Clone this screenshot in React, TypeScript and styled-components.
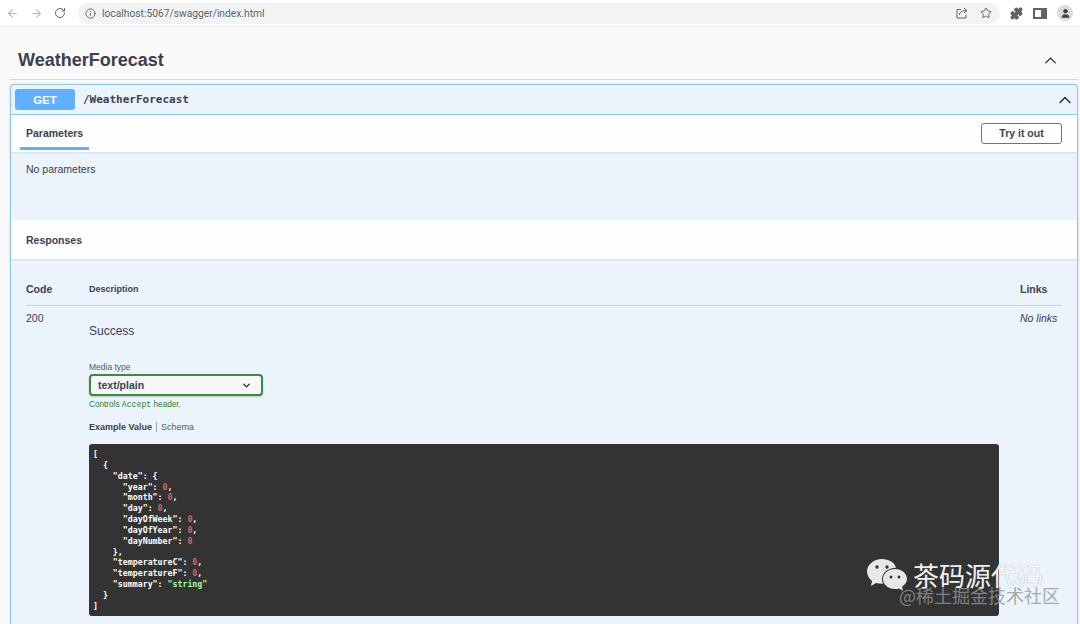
import React from "react";
import styled, { createGlobalStyle } from "styled-components";
import { ArrowLeft, ArrowRight, RotateCw, Info, Star, Puzzle, ChevronUp, ChevronDown, User } from "lucide-react";

const Global = createGlobalStyle`
  html, body { margin: 0; padding: 0; height: 624px; overflow: hidden; background: #fafafa; }
  body { font-family: "Liberation Sans", Arial, sans-serif; color: #3b4151; }
  * { box-sizing: border-box; }
`;
const Page = styled.div`position: relative; width: 1080px; height: 624px; overflow: hidden;`;
const Chrome = styled.div`
  height: 27px; background: #fff; display: flex; align-items: center; padding: 0 6px;
  border-bottom: 1px solid #eeeeee; color: #5f6368;
`;
const NavIcon = styled.span<{ $w?: number; $dim?: boolean }>`
  width: ${p => p.$w ?? 24}px; display: flex; color: ${p => (p.$dim ? "#b4b7bb" : "#5f6368")};
`;
const AddressBar = styled.div`
  width: 922px; height: 21px; margin-left: 4px; border-radius: 11px; background: #f1f3f4;
  display: flex; align-items: center; padding: 0 8px 0 7px; gap: 12px;
`;
const Url = styled.span`font-size: 10.25px; color: #5f6368; flex: 1; font-family: "Roboto", sans-serif; margin-left: -6px;`;
const Tools = styled.div`display: flex; align-items: center; margin-left: 10px; gap: 10px;`;
const Avatar = styled.span`
  width: 16px; height: 16px; border-radius: 50%; background: #dadce0; color: #3c4043;
  display: flex; align-items: center; justify-content: center;
`;
const Panel = styled.div`
  width: 14px; height: 11px; border: 2px solid #5f6368; border-right-width: 6px;
`;
const Main = styled.main`padding: 14px 2px 0 10px;`;
const SectionTitle = styled.div`
  height: 39px; display: flex; align-items: center; justify-content: space-between;
  border-bottom: 1px solid #d9dadc; padding: 0 18px 0 8px;
`;
const H = styled.h3`margin: 1px 0 0; font-size: 18px; font-weight: 700; color: #3b4151;`;
const Op = styled.section`
  margin-top: 4px; width: 1068px; height: 600px; border: 1px solid #90c5f4; border-bottom: 0; border-radius: 4px 4px 0 0;
  background: #ebf3fc; box-shadow: 0 0 3px rgba(0,0,0,.12);
`;
const Summary = styled.div`
  height: 30px; display: flex; align-items: center; padding: 0 2px 0 4px; border-bottom: 1px solid #90c5f4;
`;
const Method = styled.span`
  width: 60px; height: 21px; background: #61affe; color: #fff; border-radius: 3px; font-weight: 700; font-size: 11.5px;
  display: flex; align-items: center; justify-content: center;
`;
const PathText = styled.span`
  margin-left: 8px; flex: 1; font: 700 11px "DejaVu Sans Mono", monospace; color: #3b4151;
`;
const BarRow = styled.div<{ $h: number }>`
  height: ${p => p.$h}px; background: rgba(255,255,255,.85); display: flex; align-items: center;
  justify-content: space-between; padding: 0 15px; box-shadow: 0 1px 2px rgba(0,0,0,.1); position: relative;
`;
const Tab = styled.div`
  align-self: stretch; width: 69px; margin-left: -6px; padding: 12px 0 0 6px; font-size: 10.5px; font-weight: 700;
  border-bottom: 3px solid #61affe; height: 35px; color: #3b4151;
`;
const Heading = styled.div`font-size: 10.5px; font-weight: 700; color: #3b4151;`;
const TryBtn = styled.button`
  width: 81px; height: 21px; margin-top: -1px; background: transparent; border: 1px solid #6f7480; border-radius: 3px;
  font: 700 10.5px "Liberation Sans", sans-serif; color: #3b4151; padding: 0;
`;
const NoParams = styled.div`height: 68px; padding: 11px 15px; font-size: 10.5px; color: #3b4151;`;
const Responses = styled.div`padding: 0 15px;`;
const HeaderRow = styled.div`
  display: grid; grid-template-columns: 63px 1fr 42px; height: 47px; align-items: center; padding-top: 13px;
  border-bottom: 1px solid #cdd2d9;
`;
const Col = styled.div<{ $small?: boolean }>`font-size: ${p => (p.$small ? 9 : 10.5)}px; font-weight: 700; color: #3b4151;`;
const BodyRow = styled.div`display: grid; grid-template-columns: 63px 1fr 42px; padding-top: 6px;`;
const Code = styled.div`font-size: 10.5px; color: #3b4151;`;
const NoLinks = styled.div`font-size: 10.5px; font-style: italic; color: #3b4151;`;
const Desc = styled.div`display: flex; flex-direction: column; align-items: flex-start;`;
const Success = styled.div`margin-top: 12px; font-size: 12px; color: #3b4151; height: 37px;`;
const Label = styled.div`margin-top: 1px; font-size: 8.5px; color: #555b68; height: 12px;`;
const Select = styled.div`
  width: 174px; height: 22px; border: 2px solid #3d8b40; border-radius: 4px; background: #f7f7f7;
  display: flex; align-items: center; justify-content: space-between; padding: 0 9px 0 7px;
  font-size: 10.5px; font-weight: 700; color: #3b4151; box-shadow: 0 1px 2px rgba(0,0,0,.2);
`;
const Controls = styled.div`margin-top: 4px; font-size: 8.2px; color: #2f8132; height: 11px;`;
const Mono = styled.span`font-family: "Liberation Mono", monospace;`;
const Tabs = styled.div`margin-top: 10px; display: flex; align-items: center; font-size: 9px; height: 11px;`;
const ActiveTab = styled.span`font-weight: 700; color: #3b4151; padding-right: 4px; border-right: 1px solid #9aa0a9;`;
const OtherTab = styled.span`color: #555b68; padding-left: 4px;`;
const CodeBlock = styled.div`
  margin: 12px 0 0; width: 910px; height: 172px; padding: 5px 4px; border-radius: 3px; background: #333333;
  color: #fff; font: 700 8.25px/10.85px "DejaVu Sans Mono", monospace; white-space: pre;
`;
const CodeLine = styled.div`height: 10.85px;`;
const Num = styled.span`color: #d36363;`;
const Str = styled.span`color: #a2fca2;`;
const Watermark = styled.div`
  position: absolute; left: 866px; top: 558px; width: 200px; height: 50px; color: #fff;
`;
const Brand = styled.div`
  position: absolute; left: 47px; top: 2px; font: 400 26px/30px "Noto Sans CJK SC", sans-serif; white-space: nowrap;
  color: rgba(255,255,255,.92); text-shadow: 0 0 1px rgba(120,120,120,.7);
`;
const Credit = styled.div`
  position: absolute; left: 33px; top: 27px; font: 400 18px/20px "Noto Sans CJK SC", sans-serif; white-space: nowrap;
  color: rgba(150,150,150,.8);
`;
const Logo = styled.svg`position: absolute; left: 0; top: 0;`;

type Line = { text: string; num?: boolean; str?: boolean; tail?: string };
const lines: Line[] = [
  { text: "[" },
  { text: "  {" },
  { text: '    "date": {' },
  { text: '      "year": ', num: true, tail: "," },
  { text: '      "month": ', num: true, tail: "," },
  { text: '      "day": ', num: true, tail: "," },
  { text: '      "dayOfWeek": ', num: true, tail: "," },
  { text: '      "dayOfYear": ', num: true, tail: "," },
  { text: '      "dayNumber": ', num: true },
  { text: "    }," },
  { text: '    "temperatureC": ', num: true, tail: "," },
  { text: '    "temperatureF": ', num: true, tail: "," },
  { text: '    "summary": ', str: true },
  { text: "  }" },
  { text: "]" },
];

export default function App() {
  return (
    <Page>
      <Global />
      <Chrome>
        <NavIcon $dim><ArrowLeft size={13} /></NavIcon>
        <NavIcon $dim><ArrowRight size={13} /></NavIcon>
        <NavIcon $w={20}><RotateCw size={12} /></NavIcon>
        <AddressBar>
          <Info size={11} />
          <Url>localhost:5067/swagger/index.html</Url>
          <svg width="12" height="12" viewBox="0 0 12 12" fill="none" stroke="#5f6368" strokeWidth="1">
            <path d="M5 2.500H1v8.500h9V7.500" />
            <path d="M3.500 8c0-3 2.500-4.500 7-4.500M8 1l3 2.500L8 6" />
          </svg>
          <Star size={12} />
        </AddressBar>
        <Tools>
          <Puzzle size={13} fill="#5f6368" />
          <Panel />
          <Avatar><User size={11} fill="#3c4043" /></Avatar>
        </Tools>
      </Chrome>
      <Main>
        <SectionTitle>
          <H>WeatherForecast</H>
          <ChevronUp size={19} color="#222" strokeWidth={1.6} />
        </SectionTitle>
        <Op>
          <Summary>
            <Method>GET</Method>
            <PathText>/WeatherForecast</PathText>
            <ChevronUp size={20} color="#222" strokeWidth={1.6} />
          </Summary>
          <BarRow $h={37}>
            <Tab>Parameters</Tab>
            <TryBtn>Try it out</TryBtn>
          </BarRow>
          <NoParams>No parameters</NoParams>
          <BarRow $h={39}><Heading>Responses</Heading></BarRow>
          <Responses>
            <HeaderRow>
              <Col>Code</Col>
              <Col $small>Description</Col>
              <Col>Links</Col>
            </HeaderRow>
            <BodyRow>
              <Code>200</Code>
              <Desc>
                <Success>Success</Success>
                <Label>Media type</Label>
                <Select>text/plain<ChevronDown size={11} color="#222" strokeWidth={2.8} /></Select>
                <Controls>Controls <Mono>Accept</Mono> header.</Controls>
                <Tabs><ActiveTab>Example Value</ActiveTab><OtherTab>Schema</OtherTab></Tabs>
                <CodeBlock>
                  {lines.map((l, i) => (
                    <CodeLine key={i}>
                      {l.text}
                      {l.num && <Num>0</Num>}
                      {l.str && <Str>"string"</Str>}
                      {l.tail}
                    </CodeLine>
                  ))}
                </CodeBlock>
              </Desc>
              <NoLinks>No links</NoLinks>
            </BodyRow>
          </Responses>
        </Op>
      </Main>
      <Watermark>
        <Logo width="44" height="36" viewBox="0 0 44 36">
          <path d="M16 1C8 1 1 6.500 1 13.500c0 4 2 7 5 9.500l-1 5 5-3c2 .6 4 .8 6 .8h1c-.6-1.500-1-3-1-4.500 0-6.500 6-11.500 14-11.500C29 4.500 23 1 16 1z" fill="#e8e8e8" />
          <path d="M29 11c-7 0-12 4.500-12 10s5 10 12 10c1.500 0 3-.3 4-.6l4 2.300-1-4c3-2 5-4.700 5-7.700 0-5.500-5-10-12-10z" fill="#e8e8e8" />
          <circle cx="11" cy="9" r="1.700" fill="#333" /><circle cx="21" cy="9" r="1.700" fill="#333" />
          <circle cx="25" cy="19" r="1.500" fill="#333" /><circle cx="33" cy="19" r="1.500" fill="#333" />
        </Logo>
        <Brand>茶码源代码</Brand>
        <Credit>@稀土掘金技术社区</Credit>
      </Watermark>
    </Page>
  );
}
